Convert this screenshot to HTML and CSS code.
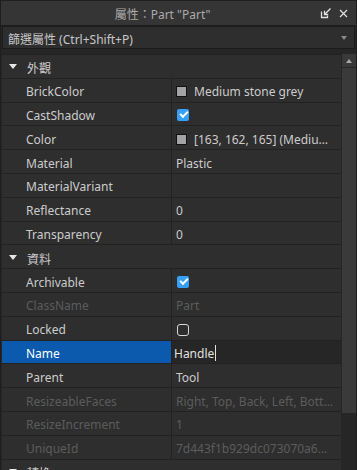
FILE: index.html
```html
<!DOCTYPE html>
<html lang="zh-Hant">
<head>
  <meta charset="UTF-8" />
  <meta name="viewport" content="width=device-width, initial-scale=1.0"/>
  <title>屬性</title>
  <link rel="stylesheet" href="styles.css">
</head>
<body>
  <div class="panel">
    <div class="titlebar">
      <span class="title">屬性：Part "Part"</span>
      <div class="title-icons">
        <svg class="icon" width="12" height="11" viewBox="0 0 12 11">
          <path d="M1.5 3.5v6h6v-2" fill="none" stroke="#e0e0e0" stroke-width="1.3"/>
          <path d="M10.5 0.5L4.8 6.2" fill="none" stroke="#e0e0e0" stroke-width="1.3"/>
          <path d="M4.5 2.8v3.7h3.7" fill="none" stroke="#e0e0e0" stroke-width="1.3"/>
        </svg>
        <svg class="icon" width="9" height="9" viewBox="0 0 9 9">
          <path d="M1 1l7 7M8 1L1 8" stroke="#e0e0e0" stroke-width="1.2"/>
        </svg>
      </div>
    </div>

    <div class="filter">
      <span class="filter-text">篩選屬性 (Ctrl+Shift+P)</span>
      <span class="drop"></span>
    </div>

    <div class="body">
      <div class="grid">
        <div class="cat"><span class="tri-down"></span>外觀</div>
        <div class="row">
          <div class="name">BrickColor</div>
          <div class="value"><span class="swatch"></span>Medium stone grey</div>
        </div>
        <div class="row">
          <div class="name">CastShadow</div>
          <div class="value"><span class="check on"></span></div>
        </div>
        <div class="row">
          <div class="name">Color</div>
          <div class="value"><span class="swatch"></span><span class="clip">[163, 162, 165] (Medium stone grey)</span></div>
        </div>
        <div class="row">
          <div class="name">Material</div>
          <div class="value">Plastic</div>
        </div>
        <div class="row">
          <div class="name">MaterialVariant</div>
          <div class="value"></div>
        </div>
        <div class="row">
          <div class="name">Reflectance</div>
          <div class="value">0</div>
        </div>
        <div class="row">
          <div class="name">Transparency</div>
          <div class="value">0</div>
        </div>

        <div class="cat"><span class="tri-down"></span>資料</div>
        <div class="row">
          <div class="name">Archivable</div>
          <div class="value"><span class="check on"></span></div>
        </div>
        <div class="row disabled">
          <div class="name">ClassName</div>
          <div class="value">Part</div>
        </div>
        <div class="row">
          <div class="name">Locked</div>
          <div class="value"><span class="check"></span></div>
        </div>
        <div class="row selected">
          <div class="name">Name</div>
          <div class="value editing">Handle<span class="cursor"></span></div>
        </div>
        <div class="row">
          <div class="name">Parent</div>
          <div class="value">Tool</div>
        </div>
        <div class="row disabled">
          <div class="name"><span class="tri-right"></span>ResizeableFaces</div>
          <div class="value"><span class="clip">Right, Top, Back, Left, Bottom, Front</span></div>
        </div>
        <div class="row disabled">
          <div class="name">ResizeIncrement</div>
          <div class="value">1</div>
        </div>
        <div class="row disabled">
          <div class="name">UniqueId</div>
          <div class="value"><span class="clip">7d443f1b929dc073070a6d2f00004c1b</span></div>
        </div>

        <div class="cat"><span class="tri-down"></span>轉換</div>
      </div>

      <div class="scrollbar">
        <div class="sb-up"><span class="sb-arrow"></span></div>
        <div class="sb-thumb"></div>
        <div class="sb-track"></div>
      </div>
    </div>
  </div>
</body>
</html>
```

FILE: styles.css
```css
* { box-sizing: border-box; }

body {
  margin: 0;
  background: #262626;
  font-family: "Noto Sans", "Noto Sans CJK TC", sans-serif;
  font-size: 12px;
  color: #cccccc;
}

.panel {
  width: 357px;
  height: 470px;
  overflow: hidden;
  background: #262626;
  border-left: 1px solid #1e1e1e;
  border-right: 1px solid #1e1e1e;
}

/* title bar */
.titlebar {
  height: 26px;
  display: flex;
  align-items: center;
  padding-top: 2px;
  background: #353535;
  border-top: 1px solid #1f1f1f;
  border-bottom: 1px solid #1f1f1f;
}

.title {
  flex: 1;
  text-align: center;
  padding-left: 4px;
  color: #aaaaaa;
}

.title-icons {
  width: 36px;
  display: flex;
  align-items: center;
  gap: 7px;
  padding-right: 8px;
  margin-top: -2px;
}

.icon { display: block; }

/* filter box */
.filter {
  height: 23px;
  margin: 0 1px 0 1px;
  display: flex;
  align-items: center;
  justify-content: space-between;
  padding: 2px 7px 0 5px;
  background: #2e2e2e;
  border: 1px solid #1b1b1b;
}

.filter-text { color: #c8c8c8; }

.drop {
  width: 0;
  height: 0;
  margin-top: -2px;
  border-left: 3px solid transparent;
  border-right: 3px solid transparent;
  border-top: 4px solid #8a8a8a;
}

/* property grid */
.body {
  display: flex;
  margin-top: 5px;
  padding-left: 1px;
}

.grid {
  flex: 1;
  border-top: 1px solid #222222;
}

.row, .cat {
  height: 23.8px;
  border-bottom: 1px solid #222222;
  background: #2e2e2e;
}

.row {
  display: grid;
  grid-template-columns: 170px 1fr;
}

.cat {
  display: flex;
  align-items: center;
  padding: 4px 0 0 7px;
}

.tri-down {
  width: 0;
  height: 0;
  margin: -3px 10px 0 0;
  border-left: 4.5px solid transparent;
  border-right: 4.5px solid transparent;
  border-top: 5px solid #e6e6e6;
}

.tri-right {
  position: absolute;
  left: -16px;
  top: 6px;
  width: 0;
  height: 0;
  border-top: 4px solid transparent;
  border-bottom: 4px solid transparent;
  border-left: 5px solid #e6e6e6;
}

.name, .value {
  display: flex;
  align-items: center;
  padding-top: 3px;
  white-space: nowrap;
  overflow: hidden;
}

.name {
  position: relative;
  padding-left: 24px;
  border-right: 1px solid #222222;
  overflow: visible;
}

.value {
  padding-left: 4px;
  padding-right: 8px;
}

.clip {
  overflow: hidden;
  text-overflow: ellipsis;
  white-space: nowrap;
}

.disabled .name, .disabled .value { color: #5c5c5c; }

.selected .name {
  background: #0b5aad;
  color: #ffffff;
}

.value.editing {
  background: #262626;
  padding-left: 2px;
  color: #e0e0e0;
}

.cursor {
  width: 1px;
  height: 16px;
  margin-left: 1px;
  background: #e0e0e0;
}

.swatch {
  flex: none;
  width: 11px;
  height: 11px;
  margin-right: 7px;
  background: #a3a2a5;
  border: 1px solid #111111;
}

.check {
  width: 12px;
  height: 12px;
  margin-left: 1px;
  border: 1.5px solid #d8d8d8;
  border-radius: 3px;
}

.check.on {
  border: none;
  border-radius: 2px;
  background: #35a0f5;
  position: relative;
}

.check.on::after {
  content: "";
  position: absolute;
  left: 3px;
  top: 2px;
  width: 6px;
  height: 3px;
  border-left: 2px solid #ffffff;
  border-bottom: 2px solid #ffffff;
  transform: rotate(-45deg);
}

/* scrollbar */
.scrollbar {
  width: 14px;
  margin-left: 1px;
  display: flex;
  flex-direction: column;
}

.sb-up {
  height: 14px;
  display: flex;
  align-items: center;
  justify-content: center;
  background: #393939;
  border-bottom: 1px solid #262626;
}

.sb-arrow {
  width: 0;
  height: 0;
  border-left: 3px solid transparent;
  border-right: 3px solid transparent;
  border-bottom: 4px solid #a8a8a8;
}

.sb-thumb {
  height: 345px;
  background: #3a3a3a;
}

.sb-track {
  flex: 1;
  background: #262626;
}
```
